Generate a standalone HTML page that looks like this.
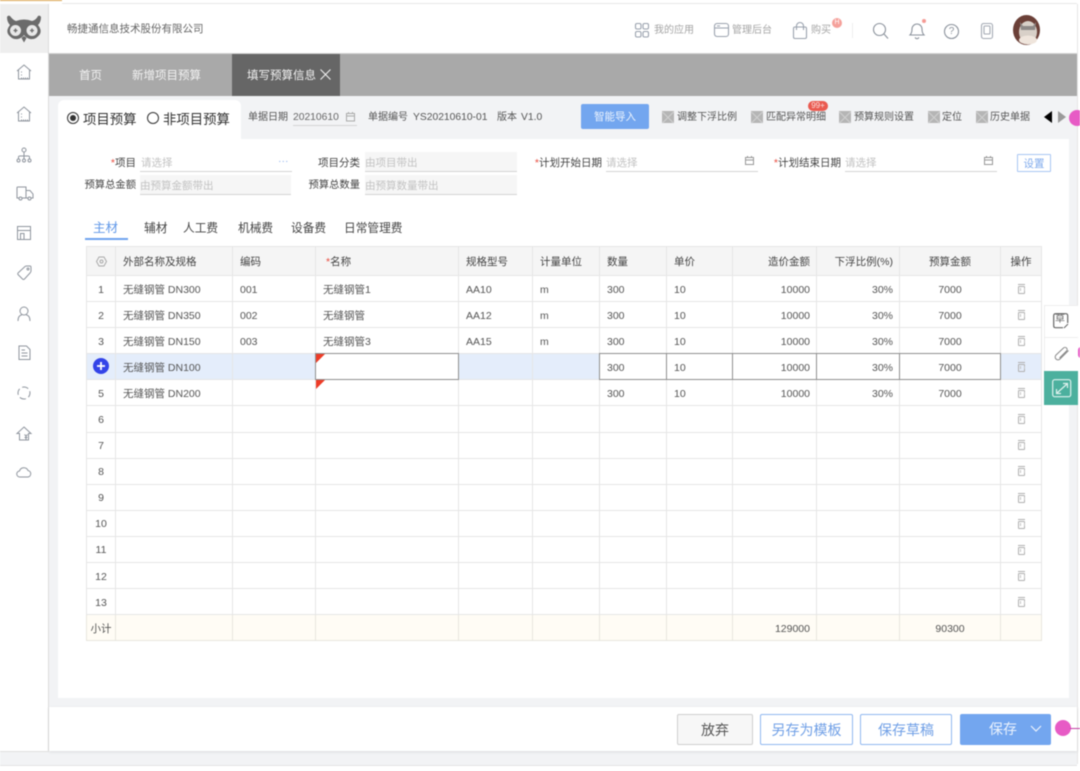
<!DOCTYPE html>
<html lang="zh"><head><meta charset="utf-8">
<style>
*{box-sizing:border-box;margin:0;padding:0}
html,body{width:1080px;height:771px;overflow:hidden;background:#fff}
body{font-family:"Liberation Sans","Noto Sans CJK SC",sans-serif;color:#555;position:relative}
#w{position:absolute;left:0;top:0;width:1080px;height:771px;overflow:hidden;filter:blur(.4px)}
.a{position:absolute}
.t{position:absolute;white-space:nowrap;line-height:16px}
svg{position:absolute;overflow:visible}
table{position:absolute;left:86px;top:246px;width:955px;border-collapse:collapse;table-layout:fixed;font-size:10.5px;color:#555}
td{border:1px solid #e6e6e6;height:26.1px;padding:2px 7px 0;white-space:nowrap;background:#fff}
tr.h td{background:#f5f5f5;height:29px;color:#444;padding-top:0}
td.n{text-align:center;padding:2px 0 0;font-size:10.5px}
td.r{text-align:right;padding-right:6px}
td.c{text-align:center;padding:2px 0 0}
tr.s td{background:#e4edfb}
tr.f td{background:#fffcf5;height:26px;border-color:#e8e6de}
.lab{font-size:10.5px;color:#444;text-align:right}
.ph{font-size:10.5px;color:#c2c2c2}
.ul{position:absolute;height:1px;background:#d4d4d4}
.ro{position:absolute;background:#f6f6f6;border-bottom:1px solid #d4d4d4}
.tool{position:absolute;top:111px;font-size:10px;color:#555;white-space:nowrap;line-height:14px}
.x{position:absolute;top:111px;width:12px;height:12px;background:#b5b5b5}
.x:before,.x:after{content:"";position:absolute;left:-2px;top:6px;width:16px;height:1px;background:#d0d0d0;transform:rotate(45deg)}
.x:after{transform:rotate(-45deg)}
.red{color:#e8493c}
.btn{position:absolute;top:714px;height:31px;border-radius:2px;font-size:14px;text-align:center;line-height:30px}
.bl{border:1px solid #92b8f0;color:#6f9fe6;background:#fff}
.tb{position:absolute;top:220px;font-size:12px;color:#444;line-height:18px;white-space:nowrap}
.del{position:relative;display:inline-block;width:7px;height:8px;border:1px solid #b0b0b0;border-radius:1px;vertical-align:middle}
.del:before{content:"";position:absolute;left:-1px;top:-3px;width:7px;height:1px;background:#b0b0b0}
.del:after{content:"";position:absolute;left:1px;top:1px;width:3px;height:3px;border-left:1px solid #c4c4c4;border-right:1px solid #c4c4c4}
.box{position:absolute;top:353px;height:27px;border:1.5px solid #8f8f8f}
.sb{fill:none;stroke:#8f959e;stroke-width:1}
</style></head><body><div id="w">

<div class="a" style="left:0;top:0;width:62px;height:1px;background:#d9a24a"></div>
<div class="a" style="left:62px;top:3px;width:1015px;height:1px;background:#e8e8e8"></div>
<div class="a" style="left:1077px;top:4px;width:1px;height:760px;background:#e6e6e6"></div>
<div class="a" style="left:0;top:4px;width:49px;height:49px;background:#eeeeee"></div>
<div class="a" style="left:48px;top:4px;width:1px;height:748px;background:#dcdcdc"></div>

<svg style="left:0;top:4px" width="49" height="49" viewBox="0 0 49 49">
<path d="M7 13 Q8 11 10 12 Q13 16 16 17 Q24 14 32 17 Q36 16 38 12 Q40 11 41 13 Q41 18 38 21 Q42 26 40 30 Q36 36 30 35 Q26 34 24 31 Q22 34 18 35 Q12 36 8 30 Q6 26 10 21 Q7 18 7 13Z" fill="#6b6b6b"/>
<circle cx="15.500" cy="26.500" r="5.500" fill="#e8e8e8"/><circle cx="32" cy="26.500" r="5.500" fill="#e8e8e8"/>
<path d="M13.500 26.500H17.500M15.500 24.500V28.500M30 26.500H34M32 24.500V28.500" stroke="#6b6b6b" stroke-width="1.300"/>
<path d="M21.500 34 L24 38.500 L26.500 34 L24 32Z" fill="#6b6b6b"/>
</svg>

<svg style="left:16px;top:64px" width="16" height="16"><path class="sb" d="M1 7L8 1L15 7M2.500 6V15H13.500V6"/><path class="sb" d="M5 8H7M5 11H7M5 14H12" stroke-dasharray="1 1"/></svg>
<svg style="left:16px;top:106px" width="16" height="16"><path class="sb" d="M1 7L8 1L15 7M2.500 6V15H13.500V6"/><path class="sb" d="M5 8H7M5 11H7M5 14H12" stroke-dasharray="1 1"/></svg>
<svg style="left:16px;top:147px" width="16" height="16"><circle class="sb" cx="8" cy="3" r="2"/><path class="sb" d="M8 5V9M2.500 12V10Q2.500 9 4 9H12Q13.500 9 13.500 10V12M8 9V12"/><circle class="sb" cx="2.500" cy="13.500" r="1.500"/><circle class="sb" cx="8" cy="13.500" r="1.500"/><circle class="sb" cx="13.500" cy="13.500" r="1.500"/></svg>
<svg style="left:16px;top:186px" width="18" height="15"><path class="sb" d="M3 12H1V1.500Q1 1 2 1H10V12H6M10 4.500H14L17 8V12H15M10 12H12"/><circle class="sb" cx="4.500" cy="12.500" r="1.500"/><circle class="sb" cx="13.500" cy="12.500" r="1.500"/></svg>
<svg style="left:17px;top:226px" width="14" height="14"><path class="sb" d="M.5 .5H13.500V13.500H.5ZM.5 4.500H13.500M3.500 13.500V7.500H7V13.500"/></svg>
<svg style="left:17px;top:265px" width="15" height="15"><path class="sb" d="M1 8L8 1.500Q9 .8 10 1L13 1Q14 1 14 2.500V6Q14 7 13 8L7.500 14Q6.500 15 5.500 14L1 9.500Q.5 8.800 1 8Z"/><circle class="sb" cx="11" cy="4" r="1"/></svg>
<svg style="left:17px;top:306px" width="14" height="15"><circle class="sb" cx="7" cy="5" r="4"/><path class="sb" d="M1 15Q1 9.500 5 8.800M13 15Q13 9.500 9 8.800"/></svg>
<svg style="left:18px;top:345px" width="13" height="15"><path class="sb" d="M1 1H8.500L12 4.500V14.500H1ZM3.500 5H7M3.500 8H9.500M3.500 11H9.500"/></svg>
<svg style="left:17px;top:386px" width="14" height="14"><circle class="sb" cx="7" cy="7" r="6" stroke-dasharray="6.500 2.900" stroke-dashoffset="2"/></svg>
<svg style="left:16px;top:426px" width="16" height="15"><path class="sb" d="M8 1L15 7.500H12.500V14H3.500V7.500H1ZM8.500 8.500L10 10L11.500 8.500M10 10V14M8.500 11.500H11.500"/></svg>
<svg style="left:16px;top:466px" width="16" height="12"><path class="sb" d="M4 11A3 3 0 0 1 3.500 5A4.500 4.500 0 0 1 12 4.500A3.300 3.300 0 0 1 12 11Z"/></svg>

<div class="t" style="left:67px;top:21px;font-size:10.500px;color:#666">畅捷通信息技术股份有限公司</div>

<svg style="left:635px;top:23px" width="16" height="16"><g fill="none" stroke="#9aa2ae" stroke-width="1.100"><rect x=".5" y=".5" width="5.500" height="5.500" rx="1.500"/><rect x="8" y=".5" width="5.500" height="5.500" rx="1.500"/><rect x=".5" y="8.500" width="5.500" height="5.500" rx="1.500"/><rect x="8" y="8.500" width="5.500" height="5.500" rx="1.500"/></g></svg>
<div class="t" style="left:654px;top:23px;font-size:10px;color:#a5a5a5">我的应用</div>
<svg style="left:714px;top:23px" width="16" height="16"><g fill="none" stroke="#9aa2ae" stroke-width="1.100"><rect x=".5" y=".5" width="14" height="13" rx="2.500"/><path d="M.5 5H14.500M3 3H6"/></g></svg>
<div class="t" style="left:732px;top:23px;font-size:10px;color:#a5a5a5">管理后台</div>
<svg style="left:793px;top:22px" width="16" height="18"><g fill="none" stroke="#9aa2ae" stroke-width="1.100"><rect x=".5" y="5" width="13" height="11.500" rx="1.500"/><path d="M3.500 8V4A3.500 3.500 0 0 1 10.500 4V8"/></g></svg>
<div class="t" style="left:811px;top:23px;font-size:10px;color:#a5a5a5">购买</div>
<div class="a" style="left:832px;top:18px;width:10px;height:10px;border-radius:5px;background:#f5a19b;color:#fff;font-size:7px;line-height:10px;text-align:center">H</div>
<div class="a" style="left:852px;top:23px;width:1px;height:15px;background:#eee"></div>
<svg style="left:873px;top:23px" width="17" height="17"><g fill="none" stroke="#8b929c" stroke-width="1.100"><circle cx="6.500" cy="6.500" r="6"/><path d="M11 11L15 15.500"/></g></svg>
<svg style="left:909px;top:22px" width="16" height="19"><g fill="none" stroke="#8b929c" stroke-width="1.100"><path d="M1 13C3 11 3 9 3 7A5 5 0 0 1 13 7C13 9 13 11 15 13Z"/><path d="M6 15.500Q8 18 10 15.500"/></g></svg>
<div class="a" style="left:922px;top:19px;width:4px;height:4px;border-radius:2px;background:#f59a94"></div>
<svg style="left:944px;top:24px" width="16" height="16"><circle cx="7.500" cy="7.500" r="7" fill="none" stroke="#8b929c" stroke-width="1.100"/></svg>
<div class="t" style="left:944px;top:24px;width:15px;text-align:center;font-size:10px;color:#8b929c">?</div>
<svg style="left:981px;top:23px" width="12" height="17"><g fill="none" stroke="#a4aab4" stroke-width="1.100"><rect x=".5" y=".5" width="11" height="15" rx="2"/><rect x="3" y="3" width="6" height="8" rx="1"/></g></svg>
<svg style="left:1013px;top:15px" width="27" height="30" viewBox="0 0 27 30"><ellipse cx="13.500" cy="15" rx="13.500" ry="15" fill="#6b4038"/><ellipse cx="15" cy="17" rx="9" ry="11" fill="#d8d0c8"/><path d="M7 7L10 11H20L23 7L22 15H8Z" fill="#8e8a88"/><ellipse cx="15" cy="25" rx="9" ry="4.500" fill="#efe5dc"/></svg>

<div class="a" style="left:48px;top:53px;width:1029px;height:1px;background:#d2d2d2"></div>
<div class="a" style="left:49px;top:54px;width:1028px;height:42px;background:#a9a9a9"></div>
<div class="a" style="left:232px;top:54px;width:108px;height:42px;background:#666"></div>
<div class="t" style="left:79px;top:68px;font-size:11.500px;color:#f2f2f2">首页</div>
<div class="t" style="left:132px;top:68px;font-size:11.500px;color:#f2f2f2">新增项目预算</div>
<div class="t" style="left:247px;top:68px;font-size:11.500px;color:#f2f2f2">填写预算信息</div>
<svg style="left:320px;top:69px" width="11" height="11"><path d="M.5 .5L10.500 10.500M10.500 .5L.5 10.500" stroke="#f2f2f2" stroke-width="1"/></svg>

<div class="a" style="left:49px;top:96px;width:1028px;height:655px;background:#f2f3f5"></div>
<div class="a" style="left:0;top:751px;width:1077px;height:14px;background:#f2f3f5"></div>
<div class="a" style="left:58px;top:100px;width:183px;height:40px;background:#fff;border-radius:6px 6px 0 0"></div>
<div class="a" style="left:58px;top:139px;width:1011px;height:559px;background:#fff"></div>

<svg style="left:67px;top:112px" width="13" height="13"><circle cx="6" cy="6" r="5.500" fill="none" stroke="#333"/><circle cx="6" cy="6" r="3" fill="#333"/></svg>
<div class="t" style="left:83px;top:111px;font-size:13.400px;color:#333;line-height:18px">项目预算</div>
<svg style="left:147px;top:112px" width="13" height="13"><circle cx="6" cy="6" r="5.500" fill="none" stroke="#333"/></svg>
<div class="t" style="left:163px;top:111px;font-size:13.400px;color:#333;line-height:18px">非项目预算</div>

<div class="t" style="left:248px;top:110px;font-size:10px;color:#555">单据日期</div>
<div class="t" style="left:293px;top:110px;font-size:10.300px;color:#666">20210610</div>
<div class="ul" style="left:293px;top:125px;width:64px"></div>
<svg style="left:346px;top:112px" width="10" height="10"><g fill="none" stroke="#aaa"><rect x=".5" y="1.500" width="8" height="7.500"/><path d="M.5 4H8.500M2.500 0V2M6.500 0V2"/></g></svg>
<div class="t" style="left:368px;top:110px;font-size:10px;color:#555">单据编号</div>
<div class="t" style="left:413px;top:110px;font-size:10.300px;color:#555">YS20210610-01</div>
<div class="t" style="left:497px;top:110px;font-size:10px;color:#555">版本</div>
<div class="t" style="left:521px;top:110px;font-size:10.300px;color:#555">V1.0</div>

<div class="a" style="left:581px;top:104px;width:68px;height:25px;background:#73a6ef;border-radius:2px;color:#eaf2fd;font-size:10.500px;text-align:center;line-height:27px">智能导入</div>

<div class="x" style="left:662px"></div><div class="tool" style="left:677px">调整下浮比例</div>
<div class="x" style="left:751px"></div><div class="tool" style="left:766px">匹配异常明细</div>
<div class="a" style="left:808px;top:101px;width:20px;height:10px;border-radius:5px;background:#ea5a50;color:#fbdcd9;font-size:8px;line-height:10px;text-align:center">99+</div>
<div class="x" style="left:839px"></div><div class="tool" style="left:854px">预算规则设置</div>
<div class="x" style="left:928px"></div><div class="tool" style="left:942px">定位</div>
<div class="x" style="left:976px"></div><div class="tool" style="left:990px">历史单据</div>
<svg style="left:1043px;top:110px" width="28" height="14"><path d="M9 1V13L1 7Z" fill="#000"/><path d="M15 1V13L23 7Z" fill="#9a9a9a"/></svg>
<div class="a" style="left:1069px;top:110px;width:16px;height:16px;border-radius:8px;background:#e75bc5"></div>

<div class="t lab" style="left:100px;top:155px;width:36px"><span class="red">*</span>项目</div>
<div class="t ph" style="left:141px;top:155px">请选择</div>
<div class="t" style="left:278px;top:153px;font-size:10.500px;color:#8fb4ee">···</div>
<div class="ul" style="left:140px;top:171px;width:152px"></div>
<div class="t lab" style="left:80px;top:178px;width:56px;font-size:10.300px">预算总金额</div>
<div class="ro" style="left:140px;top:175px;width:151px;height:20px"></div>
<div class="t ph" style="left:140px;top:178px">由预算金额带出</div>

<div class="t lab" style="left:300px;top:155px;width:60px">项目分类</div>
<div class="ro" style="left:365px;top:152px;width:152px;height:20px"></div>
<div class="t ph" style="left:365px;top:155px">由项目带出</div>
<div class="t lab" style="left:300px;top:178px;width:60px;font-size:10.300px">预算总数量</div>
<div class="ro" style="left:365px;top:175px;width:152px;height:20px"></div>
<div class="t ph" style="left:365px;top:178px">由预算数量带出</div>

<div class="t lab" style="left:521px;top:155px;width:81px"><span class="red">*</span>计划开始日期</div>
<div class="t ph" style="left:606px;top:155px">请选择</div>
<div class="ul" style="left:606px;top:171px;width:152px"></div>
<svg style="left:745px;top:156px" width="10" height="10"><g fill="none" stroke="#999"><rect x=".5" y="1.500" width="8" height="7"/><path d="M.5 4H8.500M2.500 0V2M6.500 0V2"/></g></svg>
<div class="t lab" style="left:760px;top:155px;width:81px"><span class="red">*</span>计划结束日期</div>
<div class="t ph" style="left:845px;top:155px">请选择</div>
<div class="ul" style="left:845px;top:171px;width:152px"></div>
<svg style="left:984px;top:156px" width="10" height="10"><g fill="none" stroke="#999"><rect x=".5" y="1.500" width="8" height="7"/><path d="M.5 4H8.500M2.500 0V2M6.500 0V2"/></g></svg>
<div class="a" style="left:1017px;top:154px;width:34px;height:18px;border:1px solid #a8c6f3;border-radius:1px;color:#7faaec;font-size:10.500px;text-align:center;line-height:18px">设置</div>

<div class="tb" style="left:93px;color:#5f97e8;font-size:12.500px;top:219px">主材</div>
<div class="a" style="left:85px;top:238px;width:43px;height:2px;background:#6fa3ee"></div>
<div class="tb" style="left:144px;font-size:11.700px">辅材</div>
<div class="tb" style="left:183px;font-size:11.700px">人工费</div>
<div class="tb" style="left:238px;font-size:11.700px">机械费</div>
<div class="tb" style="left:291px;font-size:11.700px">设备费</div>
<div class="tb" style="left:344px;font-size:11.700px">日常管理费</div>

<table>
<colgroup><col style="width:29px"><col style="width:117px"><col style="width:83px"><col style="width:143px"><col style="width:74px"><col style="width:67px"><col style="width:67px"><col style="width:66px"><col style="width:84px"><col style="width:83px"><col style="width:101px"><col style="width:41px"></colgroup>
<tr class="h"><td class="c" style="padding-top:0"><svg style="position:static;vertical-align:middle" width="11" height="11"><path d="M3 1H8L10.500 5.500L8 10H3L.5 5.500Z" fill="none" stroke="#aaa"/><circle cx="5.500" cy="5.500" r="1.500" fill="none" stroke="#aaa"/></svg></td><td>外部名称及规格</td><td>编码</td><td style="padding-left:10px"><span class="red">*</span>名称</td><td>规格型号</td><td>计量单位</td><td>数量</td><td>单价</td><td class="r">造价金额</td><td class="r">下浮比例(%)</td><td class="c" style="padding-top:0">预算金额</td><td class="c" style="padding-top:0">操作</td></tr>
<tr><td class="n">1</td><td>无缝钢管 DN300</td><td>001</td><td>无缝钢管1</td><td>AA10</td><td>m</td><td>300</td><td>10</td><td class="r">10000</td><td class="r">30%</td><td class="c">7000</td><td class="c"><i class="del"></i></td></tr>
<tr><td class="n">2</td><td>无缝钢管 DN350</td><td>002</td><td>无缝钢管</td><td>AA12</td><td>m</td><td>300</td><td>10</td><td class="r">10000</td><td class="r">30%</td><td class="c">7000</td><td class="c"><i class="del"></i></td></tr>
<tr><td class="n">3</td><td>无缝钢管 DN150</td><td>003</td><td>无缝钢管3</td><td>AA15</td><td>m</td><td>300</td><td>10</td><td class="r">10000</td><td class="r">30%</td><td class="c">7000</td><td class="c"><i class="del"></i></td></tr>
<tr class="s"><td class="n"></td><td>无缝钢管 DN100</td><td></td><td></td><td></td><td></td><td style="background:#fff">300</td><td style="background:#fff">10</td><td class="r" style="background:#fff">10000</td><td class="r" style="background:#fff">30%</td><td class="c" style="background:#fff">7000</td><td class="c"><i class="del"></i></td></tr>
<tr><td class="n">5</td><td>无缝钢管 DN200</td><td></td><td></td><td></td><td></td><td>300</td><td>10</td><td class="r">10000</td><td class="r">30%</td><td class="c">7000</td><td class="c"><i class="del"></i></td></tr>
<tr><td class="n">6</td><td></td><td></td><td></td><td></td><td></td><td></td><td></td><td></td><td></td><td></td><td class="c"><i class="del"></i></td></tr>
<tr><td class="n">7</td><td></td><td></td><td></td><td></td><td></td><td></td><td></td><td></td><td></td><td></td><td class="c"><i class="del"></i></td></tr>
<tr><td class="n">8</td><td></td><td></td><td></td><td></td><td></td><td></td><td></td><td></td><td></td><td></td><td class="c"><i class="del"></i></td></tr>
<tr><td class="n">9</td><td></td><td></td><td></td><td></td><td></td><td></td><td></td><td></td><td></td><td></td><td class="c"><i class="del"></i></td></tr>
<tr><td class="n">10</td><td></td><td></td><td></td><td></td><td></td><td></td><td></td><td></td><td></td><td></td><td class="c"><i class="del"></i></td></tr>
<tr><td class="n">11</td><td></td><td></td><td></td><td></td><td></td><td></td><td></td><td></td><td></td><td></td><td class="c"><i class="del"></i></td></tr>
<tr><td class="n">12</td><td></td><td></td><td></td><td></td><td></td><td></td><td></td><td></td><td></td><td></td><td class="c"><i class="del"></i></td></tr>
<tr><td class="n">13</td><td></td><td></td><td></td><td></td><td></td><td></td><td></td><td></td><td></td><td></td><td class="c"><i class="del"></i></td></tr>
<tr class="f"><td class="n">小计</td><td></td><td></td><td></td><td></td><td></td><td></td><td></td><td class="r">129000</td><td></td><td class="c">90300</td><td></td></tr>
</table>

<div class="box" style="left:315px;width:144px;background:#fff"></div>
<div class="box" style="left:599px;width:68px"></div>
<div class="box" style="left:666px;width:67px"></div>
<div class="box" style="left:732px;width:85px"></div>
<div class="box" style="left:816px;width:84px"></div>
<div class="box" style="left:899px;width:102px"></div>

<svg style="left:93px;top:358px" width="16" height="16"><circle cx="8" cy="8" r="8" fill="#3344e8"/><path d="M4 8H12M8 4V12" stroke="#fff" stroke-width="1.800"/></svg>
<svg style="left:316px;top:354px" width="9" height="9"><path d="M0 0H9L0 9Z" fill="#ee3b26"/></svg>
<svg style="left:316px;top:380px" width="9" height="9"><path d="M0 0H9L0 9Z" fill="#ee3b26"/></svg>

<div class="a" style="left:1078px;top:347px;width:6px;height:11px;border-radius:5px;background:#e75bc5"></div>
<div class="a" style="left:1044px;top:305px;width:34px;height:100px;background:#fff;border:1px solid #eee;border-right:none"></div>
<div class="a" style="left:1044px;top:337px;width:34px;height:1px;background:#eee"></div>
<svg style="left:1053px;top:313px" width="17" height="18"><path d="M14.700 10V2.700Q14.700 .7 12.700 .7H2.700Q.7 .7 .7 2.700V12.700Q.7 14.700 2.700 14.700H10" fill="none" stroke="#666" stroke-width="1.200"/><path d="M11 15L15 11" stroke="#666"/></svg>
<div class="t" style="left:1055px;top:314px;font-size:10px;color:#666;line-height:12px">草</div>
<svg style="left:1054px;top:346px" width="16" height="16"><path d="M14.500 4.500L6 13A2.800 2.800 0 0 1 2 9L9.500 2A2 2 0 0 1 12.500 5L5.500 12" fill="none" stroke="#8a8a8a" stroke-width="1"/></svg>
<div class="a" style="left:1044px;top:371px;width:34px;height:34px;background:#4cb09e"></div>
<svg style="left:1052px;top:379px" width="20" height="19"><rect x=".7" y=".7" width="18" height="17" rx="2" fill="none" stroke="#dff2ee" stroke-width="1.200"/><path d="M5 14L15 5M11 4.500H15.500V9M4.500 10V14.500H9" fill="none" stroke="#dff2ee" stroke-width="1.200"/></svg>

<div class="a" style="left:49px;top:707px;width:1028px;height:44px;background:#fff;box-shadow:0 1px 3px rgba(0,0,0,.1)"></div>
<div class="a" style="left:0;top:765px;width:1077px;height:1px;background:#e4e4e4"></div>
<div class="a" style="left:0;top:751px;width:49px;height:1px;background:#e0e0e0"></div>
<div class="btn" style="left:677px;width:76px;background:#f7f7f7;border:1px solid #cfcfcf;color:#555">放弃</div>
<div class="btn bl" style="left:760px;width:93px">另存为模板</div>
<div class="btn bl" style="left:860px;width:92px">保存草稿</div>
<div class="btn" style="left:960px;width:91px;background:#73a6ef;color:#eaf2fd;text-align:left;padding-left:29px">保存</div>
<svg style="left:1030px;top:725px" width="12" height="8"><path d="M1 1L6 6L11 1" fill="none" stroke="#eaf2fd" stroke-width="1.200"/></svg>
<div class="a" style="left:1055px;top:720px;width:16px;height:16px;border-radius:8px;background:#e75bc5"></div>
<div class="a" style="left:1070px;top:728px;width:10px;height:1px;background:#c33fa5"></div>

</div></body></html>
